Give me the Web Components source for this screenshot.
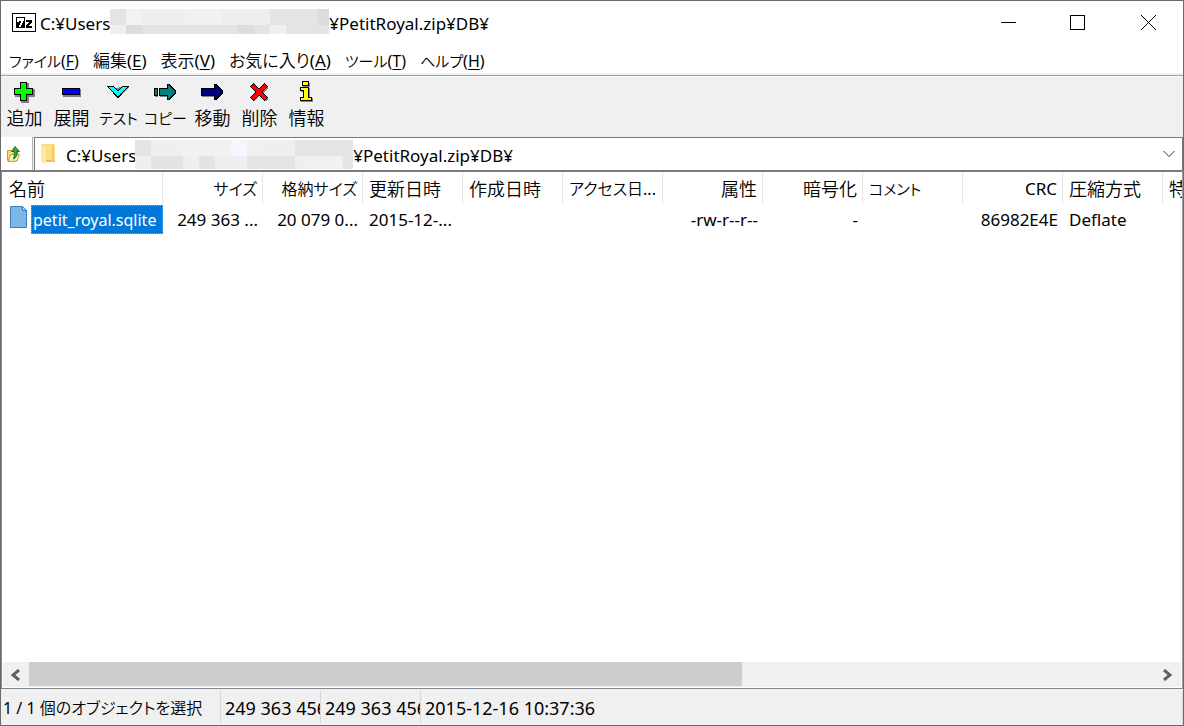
<!DOCTYPE html>
<html lang="ja">
<head>
<meta charset="utf-8">
<title>C:¥Users¥PetitRoyal.zip¥DB¥</title>
<style>
  html, body { margin: 0; height: 100%; }
  body {
    font: 400 17px/24px "Noto Sans", "Noto Sans CJK JP DemiLight", "Noto Sans CJK JP Light", "Noto Sans CJK JP", sans-serif;
    font-feature-settings: "palt";
    color: #000;
    background: #fff;
  }
</style>
</head>
<body>
<archive-window>
  <title-bar slot="title">
    <span>C:¥Users</span>
    <pixel-mask kind="title"></pixel-mask>
    <span slot="rest">¥PetitRoyal.zip¥DB¥</span>
  </title-bar>
  <menu-bar slot="menu">
    <menu-entry kana key="F">ファイル</menu-entry>
    <menu-entry key="E">編集</menu-entry>
    <menu-entry key="V">表示</menu-entry>
    <menu-entry key="A">お気に入り</menu-entry>
    <menu-entry kana key="T">ツール</menu-entry>
    <menu-entry kana key="H">ヘルプ</menu-entry>
  </menu-bar>
  <tool-bar slot="tools">
    <tool-button icon="add">追加</tool-button>
    <tool-button icon="extract">展開</tool-button>
    <tool-button kana icon="test">テスト</tool-button>
    <tool-button kana icon="copy">コピー</tool-button>
    <tool-button icon="move">移動</tool-button>
    <tool-button icon="delete">削除</tool-button>
    <tool-button icon="info">情報</tool-button>
  </tool-bar>
  <address-bar slot="address"></address-bar>
  <file-list slot="files"></file-list>
  <status-bar slot="status">
    <status-field mixed>1 / 1 個のオブジェクトを選択</status-field>
    <status-field>249 363 456</status-field>
    <status-field>249 363 456</status-field>
    <status-field>2015-12-16 10:37:36</status-field>
  </status-bar>
</archive-window>

<script>
const define = (name, html, setup) => {
  const template = document.createElement('template');
  template.innerHTML = html;
  customElements.define(name, class extends HTMLElement {
    constructor() {
      super();
      this.attachShadow({ mode: 'open' }).append(template.content.cloneNode(true));
    }
    connectedCallback() {
      if (setup) setup(this, this.shadowRoot);
    }
  });
};

define('archive-window', `
  <style>
    :host { display: flex; flex-direction: column; height: 100vh; box-sizing: border-box;
      border: 1px solid #6b6b6e; background: #f0f0f0; }
    .files { flex: 1; min-height: 0; display: flex; }
    ::slotted(file-list) { flex: 1; min-width: 0; }
  </style>
  <slot name="title"></slot>
  <slot name="menu"></slot>
  <slot name="tools"></slot>
  <slot name="address"></slot>
  <div class="files"><slot name="files"></slot></div>
  <slot name="status"></slot>
`);

/* Rows of [width, colour] cells that hide the private part of a path. */
const masks = {
  title: [
    [16, [[16, '#e4e4e4'], [16, '#f2f2f2'], [48, '#efefef'], [32, '#f1f1f1'], [48, '#eeeeee'], [48, '#e4e4e4'], [11, '#dcdcdc']]],
    [9, [[16, '#f0f0f0'], [16, '#dcdcdc'], [96, '#e4e4e4'], [16, '#dcdcdc'], [16, '#e4e4e4'], [16, '#f0f0f0'], [43, '#e4e4e4']]]
  ],
  path: [
    [16, [[16, '#e4e4e4'], [32, '#efefef'], [48, '#f1f1f1'], [16, '#f4f7fd'], [16, '#f1f1f1'], [32, '#efefef'], [58, '#e4e4e4']]],
    [13, [[16, '#efefef'], [32, '#e3e3e3'], [16, '#efefef'], [16, '#e3e3e3'], [32, '#efefef'], [48, '#e4e4e4'], [16, '#efefef'], [32, '#f1f1f1'], [10, '#e4e4e4']]]
  ]
};
define('pixel-mask', `
  <style>
    :host { display: block; }
    .row { display: flex; }
  </style>
`, (host, root) => {
  for (const [height, cells] of masks[host.getAttribute('kind')]) {
    const row = document.createElement('div');
    row.className = 'row';
    row.style.height = height + 'px';
    for (const [width, colour] of cells) {
      const cell = document.createElement('span');
      cell.style.cssText = 'width:' + width + 'px;background:' + colour;
      row.append(cell);
    }
    root.append(row);
  }
});

define('title-bar', `
  <style>
    :host { display: flex; height: 44px; padding-left: 11px; background: #fff; }
    .logo { margin: 12px 4px 0 0; }
    .text { display: flex; align-items: flex-start; flex: 1; padding-top: 8px; line-height: 30px; white-space: nowrap; }
    button { width: 70px; height: 43px; padding: 0; border: 0; background: none; display: grid; place-items: center; }
    svg { display: block; }
  </style>
  <svg class="logo" width="24" height="20" viewBox="0 0 24 20" shape-rendering="crispEdges" aria-hidden="true">
    <path fill="#000" d="M0 0h24v19H0z"/>
    <path fill="#fff" d="M1 1h22v17H1z"/>
    <path fill="#000" d="M4 4h9v11H4z"/>
    <path fill="#fff" d="M5 5h7v3h-1v2h-1v2H9v2H7v-2h1v-2h1V8H7v1H5z"/>
    <path fill="#000" d="M14 7h6v3h-1v1h-1v1h-1v1h3v2h-6v-3h1v-1h1v-1h1V9h-3z"/>
  </svg>
  <div class="text"><slot></slot><slot name="rest"></slot></div>
  <button type="button" aria-label="最小化"><svg width="15" height="15" shape-rendering="crispEdges"><path fill="#000" d="M0 7h15v1H0z"/></svg></button>
  <button type="button" aria-label="最大化"><svg width="16" height="15" shape-rendering="crispEdges"><path fill="none" stroke="#000" d="M.5 .5h14v14H.5z"/></svg></button>
  <button type="button" aria-label="閉じる"><svg width="15" height="15"><path fill="none" stroke="#000" d="M0 0l15 15M15 0L0 15"/></svg></button>
`);

define('menu-bar', `
  <style>
    :host { display: block; background: #fff; border-bottom: 1px solid #a0a0a0; }
    nav { display: flex; height: 28px; padding: 0 1px; border-bottom: 2px solid #f0f0f0; }
  </style>
  <nav><slot></slot></nav>
`);

define('menu-entry', `
  <style>
    :host { display: block; }
    :host([kana]) { font-size: 16px; }
    :host([kana]) span { font-size: 15px; }
    button { font: inherit; font-feature-settings: inherit; color: inherit; border: 0; background: none;
      padding: 4px 7px 0; white-space: nowrap; }
    u { text-underline-offset: 2px; text-decoration-thickness: 1px; text-decoration-skip-ink: none; }
  </style>
  <button type="button"><span><slot></slot></span>(<u></u>)</button>
`, (host, root) => { root.querySelector('u').textContent = host.getAttribute('key'); });

define('tool-bar', `
  <style>
    :host { display: flex; height: 60px; border-top: 1px solid #fff; background: #f0f0f0; }
  </style>
  <slot></slot>
`);

const icons = {
  add: '<path fill="#808080" d="M8 2h8v6h6v8h-6v6H8v-6H2V8h6z"/><path fill="#000" d="M7 1h7v6h6v7h-6v6H7v-6H1V7h6z"/><path fill="#0f0" d="M8 2h5v6h6v5h-6v6H8v-6H2V8h6z"/>',
  extract: '<path fill="#808080" d="M3 8h18v8H3z"/><path fill="#000" d="M2 7h18v7H2z"/><path fill="#00f" d="M3 8h16v5H3z"/>',
  test: '<path fill="#808080" d="M2 7l9 11L22 6z"/><path fill="#0ff" stroke="#000" d="M.5 5.500h6l4.500 4.500 4.500-4.500h6L11 16.500z"/>',
  copy: '<path fill="#808080" d="M1 8h3v8H1zM6 8h8V4l8 7-7 9v-4H6z"/><path fill="#000" d="M0 7h4v8H0zM5 7h8V3h2l7 7v2l-7 7h-2v-4H5z"/><path fill="#008080" d="M1 8h2v6H1zM6 8h8V4l7 7-7 7v-4H6z"/>',
  move: '<path fill="#808080" d="M1 8h13V4l8 7-7 9v-4H1z"/><path fill="#000" d="M0 7h13V3h2l7 7v2l-7 7h-2v-4H0z"/><path fill="#000080" d="M1 8h13V4l7 7-7 7v-4H1z"/>',
  delete: '<path fill="#808080" d="M6 4l6 5 6-5 2 3-5 5 5 6-2 2-6-5-6 5-2-2 5-6-5-6z"/><path fill="#f00" stroke="#000" d="M5.500 2.500l5.500 5.500 5.500-5.500 3 3-5.500 5.500 5.500 5.500-3 3-5.500-5.500-5.500 5.500-3-3 5.500-5.500-5.500-5.500z"/>',
  info: '<path fill="#808080" d="M8 2h7v4H8zM6 7h9v10h3v4H6v-4h2v-6H6z"/><path fill="#000" d="M7 0h7v5H7zM5 6h9v10h3v4H5v-4h3v-6H5z"/><path fill="#ff0" d="M8 1h5v3H8zM6 7h7v10h3v2H6v-2h3V9H6z"/>'
};
define('tool-button', `
  <style>
    :host { display: block; width: 47px; font-size: 18px; }
    :host([kana]) { font-size: 15px; }
    button { display: flex; flex-direction: column; align-items: center; width: 100%; height: 59px; padding: 4px 0 0;
      border: 0; background: none; color: inherit; font: inherit; font-feature-settings: inherit; white-space: nowrap; }
    svg { display: block; margin: 0 1px 3px 0; }
  </style>
  <button type="button"><svg width="22" height="22" viewBox="0 0 22 22" shape-rendering="crispEdges" aria-hidden="true"></svg><span><slot></slot></span></button>
`, (host, root) => { root.querySelector('svg').innerHTML = icons[host.getAttribute('icon')]; });

define('address-bar', `
  <style>
    :host { display: flex; height: 33px; }
    .up { width: 32px; padding: 0 0 0 5px; border: 0; border-right: 1px solid #b4b4b4; background: #fff; }
    .combo { position: relative; flex: 1; box-sizing: border-box; margin-left: 1px; display: flex; align-items: center;
      border: 1px solid #7a7a7a; border-bottom: 0; background: #fff; }
    .combo > svg { position: absolute; pointer-events: none; }
    .folder { left: 6px; }
    .arrow { right: 7px; }
    select { appearance: none; width: 100%; height: 32px; padding: 3px 24px 0 31px; border: 0; background: none;
      color: inherit; font: inherit; outline: none; }
    pixel-mask { position: absolute; left: 100px; top: 2px; pointer-events: none; }
    svg { display: block; }
  </style>
  <button class="up" type="button" aria-label="上へ">
    <svg width="16" height="18" viewBox="0 0 16 18">
      <path fill="#f7dc85" stroke="#c79a2c" d="M1.5 5.5h4l1 1h5v9l-9 1-1-1z"/>
      <path fill="#fff3bd" stroke="#c79a2c" d="M4.500 9.500h9l-2.500 6.500-9 .5z"/>
      <path fill="#2fa83a" stroke="#17701f" d="M9 1.500l4.500 5h-2.500c0 4-.5 6-3.500 7.500 1-3 1-4.500.5-7.500H5.500z"/>
    </svg>
  </button>
  <div class="combo">
    <svg class="folder" width="15" height="20" viewBox="0 0 15 20" aria-hidden="true">
      <path fill="#fbdf85" d="M0 0h12l2 2v16H3z"/>
      <path fill="#ffe9a2" d="M0 1l5 2v17l-5-2z"/>
      <path fill="#e9bd55" d="M5 16h9v2H5z"/>
      <path fill="#f2cc68" d="M11 0h2v18h-2z"/>
    </svg>
    <select aria-label="パス"><option>C:¥Users&emsp;&emsp;&emsp;&emsp;&emsp;&emsp;&emsp;&emsp;&emsp;&emsp;&emsp;&emsp;&ensp;&nbsp;¥PetitRoyal.zip¥DB¥</option></select>
    <pixel-mask kind="path"></pixel-mask>
    <svg class="arrow" width="12" height="8" viewBox="0 0 12 8" aria-hidden="true"><path fill="none" stroke="#333" d="M.5 1L6 6.500 11.500 1"/></svg>
  </div>
`);

define('file-list', `
  <style>
    :host { display: flex; flex-direction: column; min-height: 0; background: #fff; box-sizing: border-box;
      border: 1px solid #828790; border-top: 2px solid #7a7a7c; border-right-color: #9a9da3; }
    .view { flex: 1; min-height: 0; overflow: hidden; }
    table { table-layout: fixed; width: 1261px; border-collapse: separate; border-spacing: 0; }
    th, td { box-sizing: border-box; height: 30px; padding: 1px 6px 0; font-weight: inherit; text-align: left;
      white-space: nowrap; }
    th { height: 32px; border-right: 1px solid #e5e5e5; font-size: 18px; }
    th.kana { font-size: 15px; }
    th.mixed { font-size: 16px; }
    th.latin { font-size: 17px; }
    th:first-child { padding-left: 7px; }
    td:first-child { padding: 0; }
    col { width: 100px; }
    col:first-child { width: 161px; }
    .num { text-align: right; padding-right: 5px; }
    .name { display: flex; align-items: center; }
    .name svg { flex: none; margin: 0 4px 4px 8px; }
    .name a { flex: 1; min-width: 0; height: 29px; line-height: 28px; padding: 0 0 0 1px; font-size: 16px; color: #fff; background: #0078d7;
      border: 1px dotted #ff8728; box-sizing: border-box; text-decoration: none; }
  </style>
  <div class="view">
    <table>
      <colgroup><col><col><col><col><col><col><col><col><col><col><col><col></colgroup>
      <thead><tr>
        <th>名前</th><th class="num mixed">サイズ</th><th class="num mixed">格納サイズ</th><th>更新日時</th><th>作成日時</th><th class="mixed">アクセス日...</th>
        <th class="num">属性</th><th class="num">暗号化</th><th class="kana">コメント</th><th class="num latin">CRC</th><th>圧縮方式</th><th>特性</th>
      </tr></thead>
      <tbody><tr>
        <td><div class="name">
          <svg width="17" height="22" viewBox="0 0 17 22" aria-hidden="true"><path fill="#7cb5e8" stroke="#3d7fb8" d="M.5 .5h12l4 4v17H.5z"/><path fill="#b8d8f4" stroke="#3d7fb8" d="M12.500 .5v4h4z"/></svg>
          <a href="#">petit_royal.sqlite</a>
        </div></td>
        <td class="num">249 363 ...</td><td class="num">20 079 0...</td><td>2015-12-...</td><td></td><td></td>
        <td class="num">-rw-r--r--</td><td class="num">-</td><td></td><td class="num">86982E4E</td><td>Deflate</td><td></td>
      </tr></tbody>
    </table>
  </div>
  <scroll-strip></scroll-strip>
`);

define('scroll-strip', `
  <style>
    :host { display: flex; height: 25px; margin: 0 1px 1px; background: #f0f0f0; }
    button { width: 26px; padding: 0 2px 0 0; border: 0; background: none; display: grid; place-items: center; }
    .track { flex: 1; }
    .thumb { width: 63.3%; height: 24px; background: #cdcdcd; }
  </style>
  <button type="button" aria-label="左へ"><svg width="9" height="12"><path fill="none" stroke="#606060" stroke-width="3" d="M8 1L2 6l6 5"/></svg></button>
  <div class="track"><div class="thumb"></div></div>
  <button type="button" aria-label="右へ"><svg width="9" height="12"><path fill="none" stroke="#606060" stroke-width="3" d="M1 1l6 5-6 5"/></svg></button>
`);

define('status-bar', `
  <style>
    :host { display: grid; grid-template-columns: 220px 100px 100px 1fr; height: 36px; box-sizing: border-box;
      padding: 2px 0 1px; background: #f0f0f0; }
  </style>
  <slot></slot>
`);

define('status-field', `
  <style>
    :host { display: block; min-width: 0; overflow: hidden; white-space: nowrap; border-right: 1px solid #d7d7d7;
      padding: 0 0 0 4px; line-height: 34px; font-size: 18px; }
    :host([mixed]) { font-size: 16px; padding-left: 2px; }
  </style>
  <slot></slot>
`);
</script>
</body>
</html>
